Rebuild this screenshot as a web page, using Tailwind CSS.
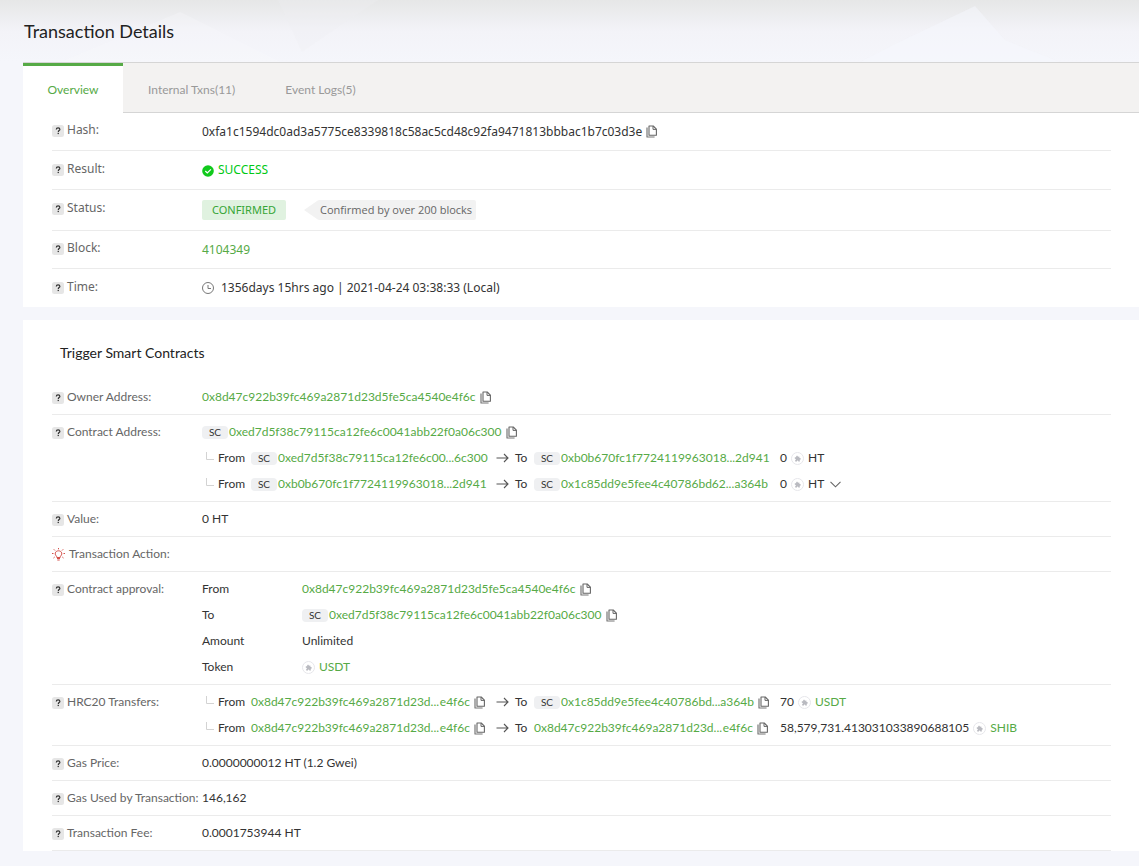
<!DOCTYPE html>
<html lang="en">
<head>
    <meta charset="UTF-8">
    <meta name="viewport" content="width=device-width, initial-scale=1.0">
    <title>Transaction Details</title>
    <script src="https://cdn.jsdelivr.net/npm/@tailwindcss/browser@4"></script>
</head>
<body class="bg-[#f5f6fb] font-['Lato',sans-serif] text-xs text-[#333]">
    <!-- icons -->
    <svg class="hidden">
        <symbol id="help" viewBox="0 0 12 12">
            <rect width="12" height="12" rx="2.5" fill="#e6e6e6" />
            <path d="M4.3 4.6c0-1.1.7-1.7 1.8-1.7s1.8.6 1.8 1.5c0 1.2-1.6 1.2-1.6 2.5" fill="none" stroke="#333" stroke-width="1.2" />
            <rect x="5.6" y="7.8" width="1.3" height="1.3" fill="#333" />
        </symbol>
        <symbol id="copy" viewBox="0 0 11 13">
            <path d="M3 1h4.200l3.200 3.200V10.200H3z" fill="none" stroke="#666" stroke-width="1.1" stroke-linejoin="round" />
            <path d="M7 1v3.400h3.400" fill="none" stroke="#666" stroke-width="1" />
            <path d="M1 2.600v9.400h7.600" fill="none" stroke="#777" stroke-width="1.2" stroke-linejoin="round" />
        </symbol>
        <symbol id="arrow" viewBox="0 0 13 10">
            <path d="M.5 5h11.500M8 1l4 4-4 4" fill="none" stroke="#555" stroke-width="1.1" />
        </symbol>
        <symbol id="branch" viewBox="0 0 8 8">
            <path d="M.5 0v7.500H8" fill="none" stroke="#d3d3d3" />
        </symbol>
        <symbol id="token" viewBox="0 0 13 13">
            <circle cx="6.500" cy="6.500" r="6" fill="#fff" stroke="#e6e6ea" />
            <path d="M3.800 5.200h1.400c-.6-1.800 1.800-2.200 1.700-.4l1.400-.2.200 1.500c1.800-.2 1.700 2 .2 1.700l.2 1.700H7.300c.1-1.300-1.500-1.300-1.400 0H4.200V8c1.200 0 1-1.500-.4-1.300z" fill="#b9bac0" />
        </symbol>
    </svg>

    <header class="relative h-[62px] overflow-hidden bg-linear-to-b from-[#e6e7e7] via-[#f3f3f8] to-[#f5f6fb]">
        <svg class="absolute inset-0 w-full h-full" viewBox="0 0 1139 62" preserveAspectRatio="none" aria-hidden="true">
            <path d="M180 12L280 62H60z" fill="#f7f8fc" opacity=".3" />
            <path d="M278 0h100L302 52z" fill="#ededf1" opacity=".3" />
            <path d="M895 44L975 6L1005 40L1060 62H860z" fill="#f6f8fd" opacity=".5" />
        </svg>
        <h1 class="relative pl-6 pt-[19px] text-lg leading-6 text-[#222]">Transaction Details</h1>
    </header>

    <main class="pl-[23px]">
        <nav class="flex h-[51px] border-t border-[#d5d5d5] text-[#999]">
            <a href="#" class="flex w-[100px] items-center justify-center border-t-3 border-[#56aa46] bg-white text-[#56aa46]">Overview</a>
            <div class="flex flex-1 items-center gap-[50px] border-b border-[#d5d5d5] bg-[#f3f2f1] pl-[25px] pt-1">
                <a href="#">Internal Txns(11)</a>
                <a href="#">Event Logs(5)</a>
            </div>
        </nav>

        <dl class="bg-white pl-[29px] pr-7 font-['Noto_Sans',sans-serif]">
            <div class="flex h-[38px] items-center border-b border-[#ebebeb]">
                <dt class="flex w-[150px] items-center gap-[3px] pb-1 text-[#666]"><svg class="mt-0.5 size-3"><use href="#help" /></svg>Hash:</dt>
                <dd class="flex items-center gap-1">0xfa1c1594dc0ad3a5775ce8339818c58ac5cd48c92fa9471813bbbac1b7c03d3e
                    <button aria-label="Copy hash"><svg class="h-[13px] w-[11px]"><use href="#copy" /></svg></button>
                </dd>
            </div>
            <div class="flex h-[39px] items-center border-b border-[#ebebeb]">
                <dt class="flex w-[150px] items-center gap-[3px] pb-0.5 text-[#666]"><svg class="mt-0.5 size-3"><use href="#help" /></svg>Result:</dt>
                <dd class="flex items-center gap-1 text-[#00c914]">
                    <svg class="mt-0.5 size-3" viewBox="0 0 12 12"><circle cx="6" cy="6" r="5.800" fill="#10c91c" /><path d="M3.300 6l2 2 3.600-3.600" fill="none" stroke="#fff" stroke-width="1.2" /></svg>SUCCESS
                </dd>
            </div>
            <div class="flex h-[41px] items-center border-b border-[#ebebeb]">
                <dt class="flex w-[150px] items-center gap-[3px] pb-[5px] text-[#666]"><svg class="mt-0.5 size-3"><use href="#help" /></svg>Status:</dt>
                <dd class="flex items-center text-[11px] leading-5">
                    <span class="w-[84px] rounded-xs bg-[#e0f2e0] text-center text-[#35a535]">CONFIRMED</span>
                    <svg class="ml-[18px] h-5 w-4" viewBox="0 0 16 20"><path d="M0 10L13 1q1-1 3-1v20q-2 0-3-1z" fill="#f2f2f2" /></svg>
                    <span class="rounded-r-xs bg-[#f2f2f2] pr-1 font-['Open_Sans',sans-serif] text-[#666]">Confirmed by over 200 blocks</span>
                </dd>
            </div>
            <div class="flex h-[38px] items-center border-b border-[#ebebeb]">
                <dt class="flex w-[150px] items-center gap-[3px] pb-1 text-[#666]"><svg class="mt-0.5 size-3"><use href="#help" /></svg>Block:</dt>
                <dd><a href="#" class="text-[#56aa46]">4104349</a></dd>
            </div>
            <div class="flex h-[38px] items-center">
                <dt class="flex w-[150px] items-center gap-[3px] pb-0.5 text-[#666]"><svg class="mt-0.5 size-3"><use href="#help" /></svg>Time:</dt>
                <dd class="flex items-center gap-[7px]">
                    <svg class="size-3" viewBox="0 0 12 12" fill="none" stroke="#777"><circle cx="6" cy="6" r="5.500" /><path d="M6 3v3.500h3" /></svg>1356days 15hrs ago | 2021-04-24 03:38:33 (Local)
                </dd>
            </div>
        </dl>

        <section class="mt-[13px] bg-white pl-[29px] pr-7 pt-5">
            <h2 class="mb-[14px] pl-2 text-sm leading-[26px] text-[#222]">Trigger Smart Contracts</h2>
            <dl class="leading-[26px]">
                <div class="flex border-b border-[#ebebeb] py-1">
                    <dt class="flex h-[26px] w-[150px] items-center gap-[3px] text-[#666]"><svg class="mt-0.5 size-3"><use href="#help" /></svg>Owner Address:</dt>
                    <dd class="flex items-center gap-1">
                        <a href="#" class="text-[#56aa46]">0x8d47c922b39fc469a2871d23d5fe5ca4540e4f6c</a>
                        <button aria-label="Copy address"><svg class="h-[13px] w-[11px]"><use href="#copy" /></svg></button>
                    </dd>
                </div>
                <div class="flex border-b border-[#ebebeb] py-1">
                    <dt class="flex h-[26px] w-[150px] items-center gap-[3px] text-[#666]"><svg class="mt-0.5 size-3"><use href="#help" /></svg>Contract Address:</dt>
                    <dd>
                        <div class="flex items-center">
                            <span class="mr-px w-[26px] shrink-0 rounded-sm bg-[#eff0f2] text-center text-[10px] leading-[13px]">SC</span>
                            <a href="#" class="text-[#56aa46]">0xed7d5f38c79115ca12fe6c0041abb22f0a06c300</a>
                            <button class="ml-1" aria-label="Copy address"><svg class="h-[13px] w-[11px]"><use href="#copy" /></svg></button>
                        </div>
                        <div class="flex items-center pl-1">
                            <svg class="mb-1 size-2"><use href="#branch" /></svg>
                            <span class="ml-1 w-[33px]">From</span>
                            <div class="flex w-[234px] items-center">
                                <span class="mr-px w-[26px] shrink-0 rounded-sm bg-[#eff0f2] text-center text-[10px] leading-[13px]">SC</span>
                                <a href="#" class="flex flex-1 justify-between text-[#56aa46]"><span>0xed7d5f38c79115ca12fe6c00...</span><span>6c300</span></a>
                            </div>
                            <svg class="ml-[11px] h-[10px] w-[13px]"><use href="#arrow" /></svg>
                            <span class="ml-[6px] w-[19px]">To</span>
                            <div class="flex w-[234px] items-center">
                                <span class="mr-px w-[26px] shrink-0 rounded-sm bg-[#eff0f2] text-center text-[10px] leading-[13px]">SC</span>
                                <a href="#" class="flex flex-1 justify-between text-[#56aa46]"><span>0xb0b670fc1f7724119963018...</span><span>2d941</span></a>
                            </div>
                            <span class="ml-3 flex items-center gap-1">0<svg class="size-[13px]"><use href="#token" /></svg>HT</span>
                        </div>
                        <div class="flex items-center pl-1">
                            <svg class="mb-1 size-2"><use href="#branch" /></svg>
                            <span class="ml-1 w-[33px]">From</span>
                            <div class="flex w-[234px] items-center">
                                <span class="mr-px w-[26px] shrink-0 rounded-sm bg-[#eff0f2] text-center text-[10px] leading-[13px]">SC</span>
                                <a href="#" class="flex flex-1 justify-between text-[#56aa46]"><span>0xb0b670fc1f7724119963018...</span><span>2d941</span></a>
                            </div>
                            <svg class="ml-[11px] h-[10px] w-[13px]"><use href="#arrow" /></svg>
                            <span class="ml-[6px] w-[19px]">To</span>
                            <div class="flex w-[234px] items-center">
                                <span class="mr-px w-[26px] shrink-0 rounded-sm bg-[#eff0f2] text-center text-[10px] leading-[13px]">SC</span>
                                <a href="#" class="flex flex-1 justify-between text-[#56aa46]"><span>0x1c85dd9e5fee4c40786bd62...</span><span>a364b</span></a>
                            </div>
                            <span class="ml-3 flex items-center gap-1">0<svg class="size-[13px]"><use href="#token" /></svg>HT</span>
                            <button class="ml-[6px]" aria-label="Show more"><svg class="h-[7px] w-[11px]" viewBox="0 0 11 7"><path d="M.5.8l5 5 5-5" fill="none" stroke="#666" stroke-width="1.1" /></svg></button>
                        </div>
                    </dd>
                </div>
                <div class="flex border-b border-[#ebebeb] py-1">
                    <dt class="flex h-[26px] w-[150px] items-center gap-[3px] text-[#666]"><svg class="mt-0.5 size-3"><use href="#help" /></svg>Value:</dt>
                    <dd>0 HT</dd>
                </div>
                <div class="flex border-b border-[#ebebeb] py-1">
                    <dt class="flex h-[26px] w-[150px] items-center gap-1 text-[#666]">
                        <svg class="size-[13px]" viewBox="0 0 13 13" fill="none" stroke="#d4504a"><path d="M4.800 9.500V8.500C2.200 6.800 2.900 2.800 6.500 2.800s4.300 4 1.700 5.700v1z" /><path d="M5 10.500h3M5.300 12h2.400M6.500 0v1.300M0 5.500h1.500M11.500 5.500H13M1.800 1.300l1.200 1.200M11.200 1.300l-1.200 1.200M1.500 10l1.200-1M11.500 10l-1.200-1" /></svg>Transaction Action:
                    </dt>
                </div>
                <div class="flex border-b border-[#ebebeb] py-1">
                    <dt class="flex h-[26px] w-[150px] items-center gap-[3px] text-[#666]"><svg class="mt-0.5 size-3"><use href="#help" /></svg>Contract approval:</dt>
                    <dd class="grid grid-cols-[100px_auto]">
                        <span>From</span>
                        <div class="flex items-center gap-1">
                            <a href="#" class="text-[#56aa46]">0x8d47c922b39fc469a2871d23d5fe5ca4540e4f6c</a>
                            <button aria-label="Copy address"><svg class="h-[13px] w-[11px]"><use href="#copy" /></svg></button>
                        </div>
                        <span>To</span>
                        <div class="flex items-center">
                            <span class="mr-px w-[26px] shrink-0 rounded-sm bg-[#eff0f2] text-center text-[10px] leading-[13px]">SC</span>
                            <a href="#" class="text-[#56aa46]">0xed7d5f38c79115ca12fe6c0041abb22f0a06c300</a>
                            <button class="ml-1" aria-label="Copy address"><svg class="h-[13px] w-[11px]"><use href="#copy" /></svg></button>
                        </div>
                        <span>Amount</span>
                        <span>Unlimited</span>
                        <span>Token</span>
                        <a href="#" class="flex items-center gap-1 text-[#56aa46]"><svg class="size-[13px]"><use href="#token" /></svg>USDT</a>
                    </dd>
                </div>
                <div class="flex border-b border-[#ebebeb] py-1">
                    <dt class="flex h-[26px] w-[150px] items-center gap-[3px] text-[#666]"><svg class="mt-0.5 size-3"><use href="#help" /></svg>HRC20 Transfers:</dt>
                    <dd>
                        <div class="flex items-center pl-1">
                            <svg class="mb-1 size-2"><use href="#branch" /></svg>
                            <span class="ml-1 w-[33px]">From</span>
                            <div class="flex w-[234px] items-center">
                                <a href="#" class="flex flex-1 justify-between text-[#56aa46]"><span>0x8d47c922b39fc469a2871d23d...</span><span>e4f6c</span></a>
                                <button class="ml-1" aria-label="Copy address"><svg class="h-[13px] w-[11px]"><use href="#copy" /></svg></button>
                            </div>
                            <svg class="ml-[11px] h-[10px] w-[13px]"><use href="#arrow" /></svg>
                            <span class="ml-[6px] w-[19px]">To</span>
                            <div class="flex w-[234px] items-center">
                                <span class="mr-px w-[26px] shrink-0 rounded-sm bg-[#eff0f2] text-center text-[10px] leading-[13px]">SC</span>
                                <a href="#" class="flex flex-1 justify-between text-[#56aa46]"><span>0x1c85dd9e5fee4c40786bd...</span><span>a364b</span></a>
                                <button class="ml-1" aria-label="Copy address"><svg class="h-[13px] w-[11px]"><use href="#copy" /></svg></button>
                            </div>
                            <span class="ml-3 flex items-center gap-1">70<svg class="size-[13px]"><use href="#token" /></svg><a href="#" class="text-[#56aa46]">USDT</a></span>
                        </div>
                        <div class="flex items-center pl-1">
                            <svg class="mb-1 size-2"><use href="#branch" /></svg>
                            <span class="ml-1 w-[33px]">From</span>
                            <div class="flex w-[234px] items-center">
                                <a href="#" class="flex flex-1 justify-between text-[#56aa46]"><span>0x8d47c922b39fc469a2871d23d...</span><span>e4f6c</span></a>
                                <button class="ml-1" aria-label="Copy address"><svg class="h-[13px] w-[11px]"><use href="#copy" /></svg></button>
                            </div>
                            <svg class="ml-[11px] h-[10px] w-[13px]"><use href="#arrow" /></svg>
                            <span class="ml-[6px] w-[19px]">To</span>
                            <div class="flex w-[234px] items-center">
                                <a href="#" class="flex flex-1 justify-between text-[#56aa46]"><span>0x8d47c922b39fc469a2871d23d...</span><span>e4f6c</span></a>
                                <button class="ml-1" aria-label="Copy address"><svg class="h-[13px] w-[11px]"><use href="#copy" /></svg></button>
                            </div>
                            <span class="ml-3 flex items-center gap-1">58,579,731.413031033890688105<svg class="size-[13px]"><use href="#token" /></svg><a href="#" class="text-[#56aa46]">SHIB</a></span>
                        </div>
                    </dd>
                </div>
                <div class="flex border-b border-[#ebebeb] py-1">
                    <dt class="flex h-[26px] w-[150px] items-center gap-[3px] text-[#666]"><svg class="mt-0.5 size-3"><use href="#help" /></svg>Gas Price:</dt>
                    <dd>0.0000000012 HT (1.2 Gwei)</dd>
                </div>
                <div class="flex border-b border-[#ebebeb] py-1">
                    <dt class="flex h-[26px] w-[150px] items-center gap-[3px] whitespace-nowrap text-[#666]"><svg class="mt-0.5 size-3"><use href="#help" /></svg>Gas Used by Transaction:</dt>
                    <dd>146,162</dd>
                </div>
                <div class="flex border-b border-[#ebebeb] py-1">
                    <dt class="flex h-[26px] w-[150px] items-center gap-[3px] text-[#666]"><svg class="mt-0.5 size-3"><use href="#help" /></svg>Transaction Fee:</dt>
                    <dd>0.0001753944 HT</dd>
                </div>
            </dl>
        </section>
    </main>
</body>
</html>
